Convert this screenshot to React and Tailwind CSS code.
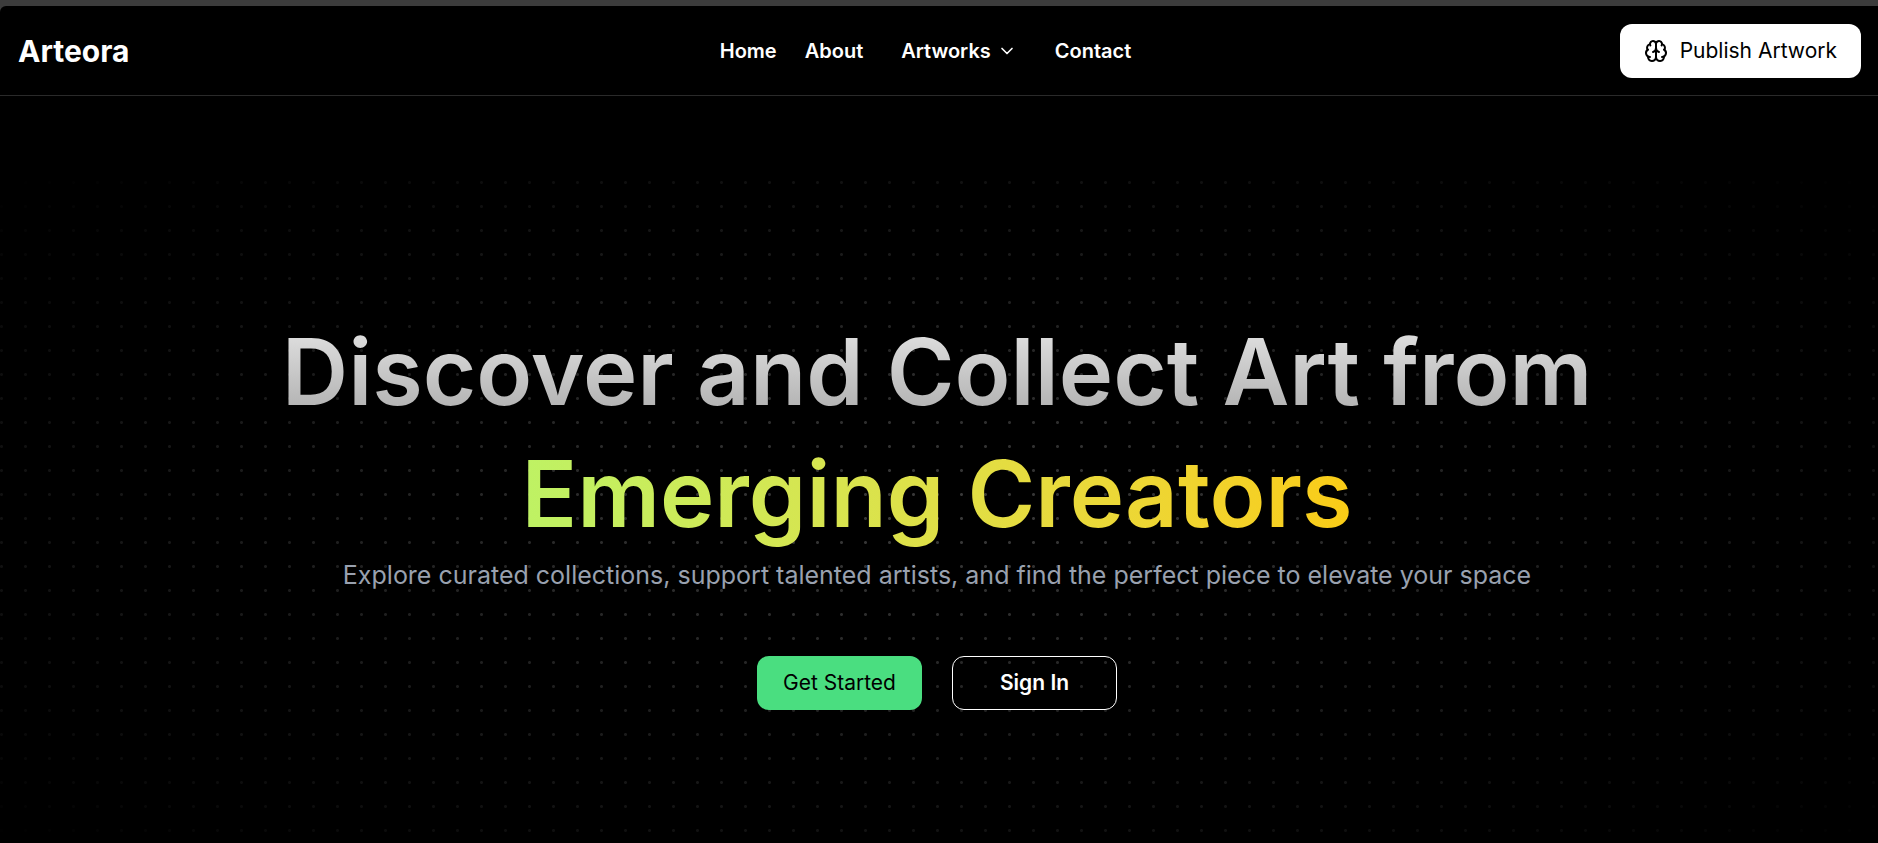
import { Brain, ChevronDown } from "lucide-react";

export default function App() {
  return (
    <div className="min-h-screen bg-[#3c3c3c] pt-[6px] font-['Inter',sans-serif] text-white">
      <div className="flex min-h-[calc(100vh-6px)] flex-col overflow-hidden rounded-tl-md bg-black">
        <header className="grid h-[90px] grid-cols-[1fr_auto_1fr] items-center border-b border-[#2a2a2a] pr-[17px] pl-[18px]">
          <a href="#" className="text-[30px] leading-9 font-bold">
            Arteora
          </a>
          <nav className="flex items-center pr-7 text-[20px] leading-7 font-semibold">
            <a href="#home">Home</a>
            <a href="#about" className="ml-7">About</a>
            <button type="button" className="ml-[38px] flex items-center gap-[6px]">
              Artworks
              <ChevronDown className="size-5" strokeWidth={2} />
            </button>
            <a href="#contact" className="ml-[38px]">Contact</a>
          </nav>
          <button
            type="button"
            className="flex h-[54px] items-center gap-3 justify-self-end rounded-xl bg-white px-6 text-[21px] leading-7 text-black"
          >
            <Brain className="size-6" strokeWidth={2} />
            Publish Artwork
          </button>
        </header>
        <main className="mt-[85px] grid flex-1">
          <div className="col-start-1 row-start-1 bg-[radial-gradient(circle_at_1.5px_1.5px,#3a3a3a_1px,transparent_2px)] bg-size-[24px_24px] mask-[radial-gradient(ellipse_at_center,black,transparent)]" />
          <section className="relative z-10 col-start-1 row-start-1 flex flex-col items-center pt-[130px] pr-1 text-center">
            <h1 className="text-[92px] leading-[122px] font-semibold">
              <span className="block bg-linear-to-b from-[#ebebeb] to-[#a6a6a6] bg-clip-text text-transparent">
                Discover and Collect Art from
              </span>
              <span className="inline-block bg-linear-to-r from-[#bef264] to-[#facc15] bg-clip-text text-transparent">
                Emerging Creators
              </span>
            </h1>
            <p className="mt-1 text-[25px] leading-8 text-[#99a1af]">
              Explore curated collections, support talented artists, and find the perfect piece to elevate your space
            </p>
            <div className="mt-[65px] flex gap-[30px] text-[21px] leading-7">
              <button type="button" className="h-[54px] w-[165px] rounded-xl bg-[#4ade80] text-black">
                Get Started
              </button>
              <button type="button" className="h-[54px] w-[165px] rounded-xl border border-white font-semibold">
                Sign In
              </button>
            </div>
          </section>
        </main>
      </div>
    </div>
  );
}
